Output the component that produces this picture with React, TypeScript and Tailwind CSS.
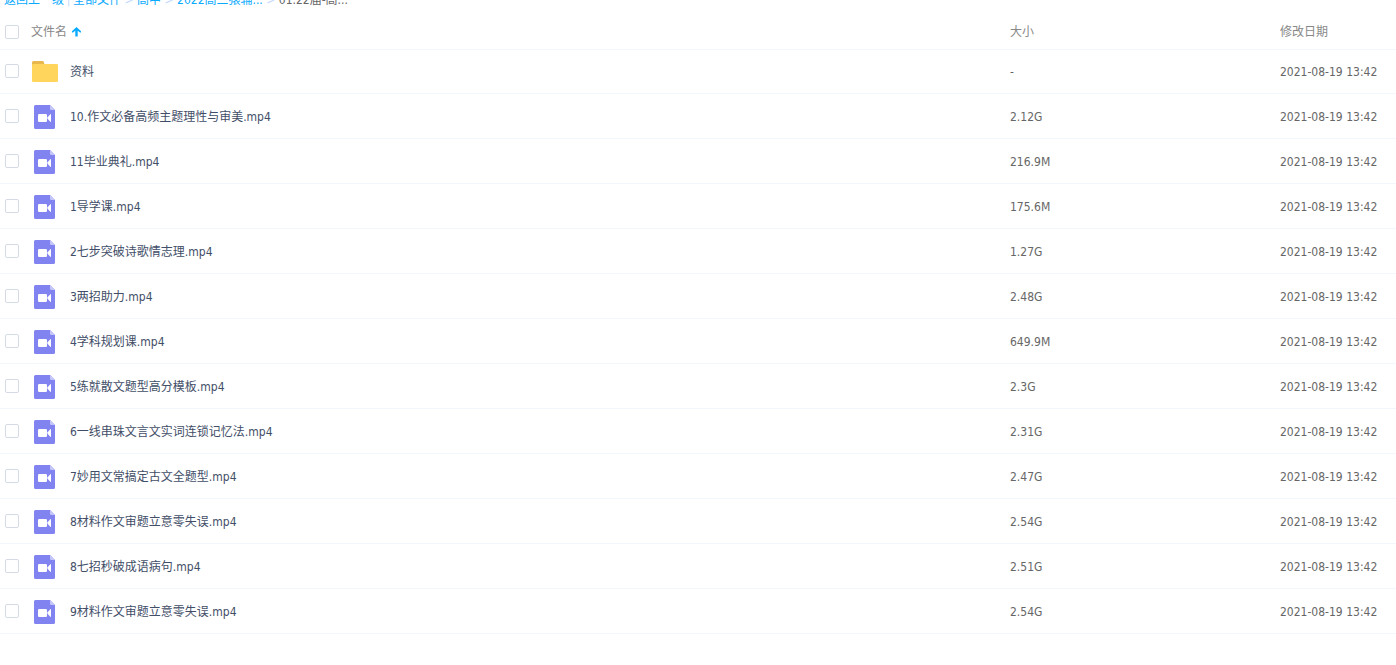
interface FileEntry {
  name: string;
  size: string;
  date: string;
  folder?: boolean;
}

const files: FileEntry[] = [
  { name: "资料", size: "-", date: "2021-08-19 13:42", folder: true },
  { name: "10.作文必备高频主题理性与审美.mp4", size: "2.12G", date: "2021-08-19 13:42" },
  { name: "11毕业典礼.mp4", size: "216.9M", date: "2021-08-19 13:42" },
  { name: "1导学课.mp4", size: "175.6M", date: "2021-08-19 13:42" },
  { name: "2七步突破诗歌情志理.mp4", size: "1.27G", date: "2021-08-19 13:42" },
  { name: "3两招助力.mp4", size: "2.48G", date: "2021-08-19 13:42" },
  { name: "4学科规划课.mp4", size: "649.9M", date: "2021-08-19 13:42" },
  { name: "5练就散文题型高分模板.mp4", size: "2.3G", date: "2021-08-19 13:42" },
  { name: "6一线串珠文言文实词连锁记忆法.mp4", size: "2.31G", date: "2021-08-19 13:42" },
  { name: "7妙用文常搞定古文全题型.mp4", size: "2.47G", date: "2021-08-19 13:42" },
  { name: "8材料作文审题立意零失误.mp4", size: "2.54G", date: "2021-08-19 13:42" },
  { name: "8七招秒破成语病句.mp4", size: "2.51G", date: "2021-08-19 13:42" },
  { name: "9材料作文审题立意零失误.mp4", size: "2.54G", date: "2021-08-19 13:42" },
];

const parents = ["全部文件", "高中", "2022高三猿辅..."];

function Checkbox({ label }: { label: string }) {
  return (
    <input
      type="checkbox"
      aria-label={label}
      className="block h-3.5 w-3.5 appearance-none rounded-xs border border-[#d5dbe5] bg-white checked:border-[#09aaff] checked:bg-[#09aaff]"
    />
  );
}

function SortIcon() {
  return (
    <svg width="9" height="10" viewBox="0 0 9 10" fill="#09aaff" aria-hidden="true">
      <path d="M4.500 0L9 4.300V5.500H8L5.700 3.800V9.500H3.300V3.800L1 5.500H0V4.300z" />
    </svg>
  );
}

function FolderIcon() {
  return (
    <svg width="26" height="23" viewBox="0 0 26 23" aria-hidden="true">
      <path d="M0 1.500A1.500 1.500 0 0 1 1.500 0H10.800Q11.500 0 11.800 1L12.500 3.500V8H0z" fill="#e9b84c" />
      <rect y="3" width="26" height="18" rx="1.300" fill="#ffd55c" />
    </svg>
  );
}

function VideoIcon() {
  return (
    <svg width="21" height="24" viewBox="0 0 21 24" aria-hidden="true">
      <path d="M1.500 0H16L21 5V22.500a1.500 1.500 0 0 1-1.500 1.500h-18A1.500 1.500 0 0 1 0 22.500v-21A1.500 1.500 0 0 1 1.500 0z" fill="#8183f1" />
      <path d="M16 0L21 5H17.200A1.200 1.200 0 0 1 16 3.800z" fill="#c5c6fa" />
      <rect x="4" y="9" width="9" height="8" rx="1.300" fill="#fff" />
      <path d="M13.500 12.300L16.300 9.300Q17 8.800 17 9.700V16.300Q17 17.200 16.300 16.700L13.500 13.700z" fill="#fff" />
    </svg>
  );
}

function Breadcrumb() {
  return (
    <nav className="flex h-3 items-end overflow-hidden pb-1 pl-1 leading-4 whitespace-nowrap text-[#09aaff]">
      <a href="#back">返回上一级</a>
      <span className="w-[9px] text-center text-[#c4dbfe]">|</span>
      {parents.map((p) => (
        <span key={p} className="flex">
          <a href="#folder">{p}</a>
          <span className="w-4 text-center text-[#c4dbfe]">&gt;</span>
        </span>
      ))}
      <span className="text-[#666]">01.22届-高...</span>
    </nav>
  );
}

function FileRow({ file }: { file: FileEntry }) {
  return (
    <tr className={file.folder ? "h-11 border-b border-[#f2f6fd]" : "h-[45px] border-b border-[#f2f6fd]"}>
      <td className="p-0 pl-[5px]">
        <Checkbox label={file.name} />
      </td>
      <td className="p-0 pt-0.5">
        <div className="flex items-center gap-3">
          <span className="flex w-[27px] justify-center">
            {file.folder ? <FolderIcon /> : <VideoIcon />}
          </span>
          <a href="#file" className="text-[#424e67]">{file.name}</a>
        </div>
      </td>
      <td className="p-0 pt-0.5">{file.size}</td>
      <td className="p-0 pt-0.5">{file.date}</td>
    </tr>
  );
}

export default function App() {
  return (
    <div className="min-h-screen bg-white font-['DejaVu_Sans_Condensed','Noto_Sans','Noto_Sans_CJK_SC',sans-serif] text-xs text-[#666]">
      <Breadcrumb />
      <table className="w-full table-fixed border-collapse text-left">
        <thead className="text-[#888]">
          <tr className="h-[37px] border-b border-[#f2f6fd]">
            <th className="w-[31px] p-0 pt-[3px] pl-[5px] font-normal">
              <Checkbox label="全选" />
            </th>
            <th className="p-0 pt-[3px] font-normal">
              <div className="flex items-center gap-[5px]">
                文件名
                <SortIcon />
              </div>
            </th>
            <th className="w-[270px] p-0 pt-[3px] font-normal">大小</th>
            <th className="w-[116px] p-0 pt-[3px] font-normal">修改日期</th>
          </tr>
        </thead>
        <tbody>
          {files.map((file) => (
            <FileRow key={file.name} file={file} />
          ))}
        </tbody>
      </table>
    </div>
  );
}
